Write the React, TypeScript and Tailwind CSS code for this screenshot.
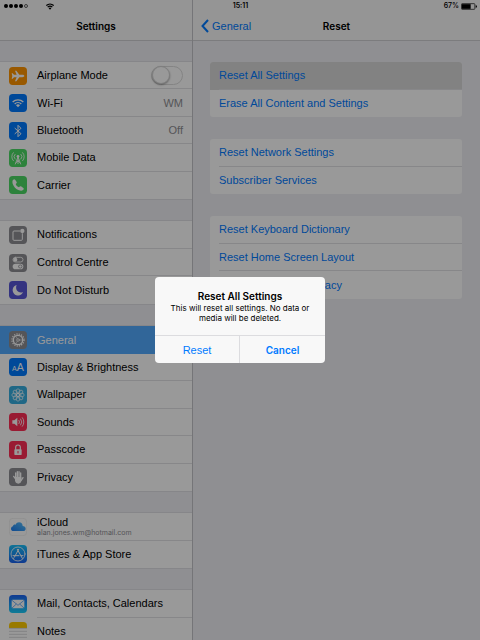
import { ReactNode, useState } from "react";

interface IconProps {
  color: string;
  children?: ReactNode;
}

// every row icon is drawn on a 54 unit grid and shown at 18px
const Icon = ({ color, children }: IconProps) => (
  <svg viewBox="0 0 54 54" className="size-[18px] shrink-0" aria-hidden="true">
    <rect width="54" height="54" rx="11" fill={color} />
    {children}
  </svg>
);

const stroke = {
  fill: "none",
  stroke: "#fff",
  strokeLinecap: "round",
  strokeLinejoin: "round",
} as const;

const AirplaneIcon = () => (
  <Icon color="#ff9500">
    <path
      fill="#fff"
      d="M46 27c0 2-3 3.500-6 3.500h-9L22 43h-4l5-12.500h-8L11 35H8l2-8-2-8h3l4 4.500h8L18 11h4l9 12.500h9c3 0 6 1.500 6 3.500z"
    />
  </Icon>
);

const WifiIcon = () => (
  <Icon color="#007aff">
    <g {...stroke} strokeWidth="4" strokeLinecap="butt">
      <path d="M11 24a23 23 0 0 1 32 0" />
      <path d="M17 30a14.500 14.500 0 0 1 20 0" />
    </g>
    <path fill="#fff" d="M21 34a8.500 8.500 0 0 1 12 0l-6 6z" />
  </Icon>
);

const BluetoothIcon = () => (
  <Icon color="#007aff">
    <path {...stroke} strokeWidth="3" d="M18 19l18 16-9 9V10l9 9-18 16" />
  </Icon>
);

const MobileIcon = () => (
  <Icon color="#4cd964">
    <g {...stroke} strokeWidth="2.500">
      <path d="M18 16a10 10 0 0 0 0 14M13 11a17 17 0 0 0 0 24M36 16a10 10 0 0 1 0 14M41 11a17 17 0 0 1 0 24" />
      <path d="M27 24l-8 21M27 24l8 21M24 34l9 7M30 34l-9 7M27 24v20" />
    </g>
    <circle cx="27" cy="22" r="4" fill="#fff" />
  </Icon>
);

const CarrierIcon = () => (
  <Icon color="#4cd964">
    <path
      fill="#fff"
      d="M12 12c3-3 5-3 7 0l4 6c1 2 0 4-3 6 2 5 5 8 10 10 2-3 4-4 6-3l6 4c3 2 3 4 0 7-3 3-7 3-12 1C20 39 14 32 11 23c-1-5-1-9 1-11z"
    />
  </Icon>
);

const NotificationsIcon = () => (
  <Icon color="#8e8e93">
    <path {...stroke} strokeWidth="3" d="M32 15H15c-2 0-3 1-3 3v22c0 2 1 3 3 3h22c2 0 3-1 3-3V23" />
    <circle cx="40" cy="15" r="6.500" fill="#fff" />
  </Icon>
);

const ControlIcon = () => (
  <Icon color="#8e8e93">
    <rect x="12" y="10" width="30" height="14" rx="7" {...stroke} strokeWidth="2.500" />
    <circle cx="19" cy="17" r="6" fill="#fff" />
    <rect x="11" y="29" width="32" height="17" rx="8.500" fill="#fff" />
    <circle cx="34" cy="37.500" r="6" fill="#8e8e93" />
    <circle cx="34" cy="37.500" r="4" fill="#fff" />
  </Icon>
);

const MoonIcon = () => (
  <Icon color="#5856d6">
    <path fill="#fff" d="M23 12a16 16 0 1 0 19 21c-14 6-25-7-19-21z" />
  </Icon>
);

const GearIcon = () => (
  <Icon color="#8e8e93">
    <circle cx="27" cy="27" r="18" fill="none" stroke="#fff" strokeWidth="4" strokeDasharray="3.500 3.570" />
    <circle cx="27" cy="27" r="14" {...stroke} strokeWidth="4" />
    <circle cx="27" cy="27" r="4" {...stroke} strokeWidth="2" />
    <path {...stroke} strokeWidth="1.500" d="M31 27h9M25 23.500L20 15M25 30.500L20 39" />
  </Icon>
);

const DisplayIcon = () => (
  <Icon color="#007aff">
    <text x="9" y="38" fill="#fff" fontSize="21" fontWeight="500">
      A
    </text>
    <text x="23" y="38" fill="#fff" fontSize="32" fontWeight="500">
      A
    </text>
  </Icon>
);

const WallpaperIcon = () => (
  <Icon color="#36aee0">
    <g fill="none" stroke="#fff" strokeWidth="2">
      {[0, 45, 90, 135, 180, 225, 270, 315].map((angle) => (
        <ellipse key={angle} cx="27" cy="16" rx="5.500" ry="7.500" transform={`rotate(${angle} 27 27)`} />
      ))}
      <circle cx="27" cy="27" r="5" />
    </g>
  </Icon>
);

const SoundsIcon = () => (
  <Icon color="#ff2d55">
    <path fill="#fff" d="M10 22h6l9-8v26l-9-8h-6z" />
    <path {...stroke} strokeWidth="2.500" d="M30 22a8 8 0 0 1 0 10M35 18a14 14 0 0 1 0 18M40 14a20 20 0 0 1 0 26" />
  </Icon>
);

const PasscodeIcon = () => (
  <Icon color="#ff2d55">
    <rect x="16" y="25" width="22" height="17" rx="2" fill="#fff" />
    <path {...stroke} strokeWidth="3.500" d="M20 25v-6a7 7 0 0 1 14 0v6" />
    <path stroke="#ff2d55" strokeWidth="3" strokeLinecap="round" d="M27 31v5" />
  </Icon>
);

const PrivacyIcon = () => (
  <Icon color="#8e8e93">
    <g {...stroke} strokeWidth="4">
      <path d="M20 30V15M25 28V11M30 28V11M35 30V15M36 38l6-9M20 33l-6-8" />
    </g>
    <path fill="#fff" d="M18 27h19v10c0 6-3 10-9 10s-10-4-10-10z" />
  </Icon>
);

const CloudIcon = () => (
  <Icon color="#fff">
    <defs>
      <linearGradient id="cloud" x1="0" x2="1" y1="1" y2="0">
        <stop offset="0" stopColor="#1a7cf2" />
        <stop offset="1" stopColor="#5cc2fa" />
      </linearGradient>
    </defs>
    <path
      fill="url(#cloud)"
      d="M14 39c-5 0-8-3-8-7 0-4 3-6 6-7 0-4 4-6 8-5 2-5 6-7 10-7 7 0 11 5 11 11 5 0 9 3 9 8 0 4-3 7-8 7z"
    />
    <rect x="1" y="1" width="52" height="52" rx="11" fill="none" stroke="#eaeaea" strokeWidth="2" />
  </Icon>
);

const StoreIcon = () => (
  <Icon color="url(#store)">
    <defs>
      <linearGradient id="store" x1="0" x2="0" y1="0" y2="1">
        <stop offset="0" stopColor="#19c2fb" />
        <stop offset="1" stopColor="#1b62f0" />
      </linearGradient>
    </defs>
    <circle cx="27" cy="27" r="21" {...stroke} strokeWidth="2.500" />
    <path {...stroke} strokeWidth="3" d="M29 13L17 35M25 13l15 27M12 32h18M36 32h6M15 38l-1 2" />
  </Icon>
);

const MailIcon = () => (
  <Icon color="url(#mail)">
    <defs>
      <linearGradient id="mail" x1="0" x2="0" y1="0" y2="1">
        <stop offset="0" stopColor="#1b63f3" />
        <stop offset="1" stopColor="#19cffb" />
      </linearGradient>
    </defs>
    <rect x="8" y="14" width="38" height="26" rx="3" fill="#fff" />
    <path fill="none" stroke="#2a8df5" strokeWidth="2" d="M9 16l18 15 18-15M9 39l13-12M45 39L32 27" />
  </Icon>
);

const NotesIcon = () => (
  <Icon color="#fff">
    <path fill="#ffcc00" d="M0 18v-7A11 11 0 0 1 11 0h32a11 11 0 0 1 11 11v7z" />
    <path stroke="#c4c4c8" strokeWidth="2" d="M0 19h54M0 28h54M0 37h54M0 46h54" />
  </Icon>
);

interface Item {
  label: string;
  icon: ReactNode;
  value?: string;
  detail?: string;
}

interface Group {
  height: string;
  items: Item[];
}

const sidebar: Group[] = [
  {
    height: "h-[137px]",
    items: [
      { label: "Airplane Mode", icon: <AirplaneIcon /> },
      { label: "Wi-Fi", icon: <WifiIcon />, value: "WM" },
      { label: "Bluetooth", icon: <BluetoothIcon />, value: "Off" },
      { label: "Mobile Data", icon: <MobileIcon /> },
      { label: "Carrier", icon: <CarrierIcon /> },
    ],
  },
  {
    height: "h-[83px]",
    items: [
      { label: "Notifications", icon: <NotificationsIcon /> },
      { label: "Control Centre", icon: <ControlIcon /> },
      { label: "Do Not Disturb", icon: <MoonIcon /> },
    ],
  },
  {
    height: "h-[165px]",
    items: [
      { label: "General", icon: <GearIcon /> },
      { label: "Display & Brightness", icon: <DisplayIcon /> },
      { label: "Wallpaper", icon: <WallpaperIcon /> },
      { label: "Sounds", icon: <SoundsIcon /> },
      { label: "Passcode", icon: <PasscodeIcon /> },
      { label: "Privacy", icon: <PrivacyIcon /> },
    ],
  },
  {
    height: "h-[55px]",
    items: [
      { label: "iCloud", icon: <CloudIcon />, detail: "alan.jones.wm@hotmail.com" },
      { label: "iTunes & App Store", icon: <StoreIcon /> },
    ],
  },
  {
    height: "h-[55px]",
    items: [
      { label: "Mail, Contacts, Calendars", icon: <MailIcon /> },
      { label: "Notes", icon: <NotesIcon /> },
    ],
  },
];

const resetGroups = [
  { height: "h-[55px]", items: ["Reset All Settings", "Erase All Content and Settings"] },
  { height: "h-[55px]", items: ["Reset Network Settings", "Subscriber Services"] },
  {
    height: "h-[83px]",
    items: ["Reset Keyboard Dictionary", "Reset Home Screen Layout", "Reset Location & Privacy"],
  },
];

const StatusBar = () => (
  <div className="absolute inset-x-0 top-0 grid h-3 grid-cols-3 items-center pr-[3px] pl-1 font-['Inter',sans-serif] text-[7px] leading-3 text-black">
    <div className="flex items-center gap-px">
      {[1, 2, 3, 4].map((dot) => (
        <span key={dot} className="size-[4px] rounded-full bg-black" />
      ))}
      <span className="size-[4px] rounded-full border border-black/60" />
      <svg viewBox="0 0 24 20" className="ml-[17px] h-[7px] w-2" aria-hidden="true">
        <path fill="none" stroke="#000" strokeWidth="3.500" d="M1 7a16 16 0 0 1 22 0M5 12a10 10 0 0 1 14 0" />
        <path d="M8 15a6 6 0 0 1 8 0l-4 5z" />
      </svg>
    </div>
    <span className="text-center font-semibold">15:11</span>
    <div className="flex items-center justify-end gap-[2px]">
      <span className="font-medium">67%</span>
      <svg viewBox="0 0 48 20" className="h-[7px] w-4" aria-hidden="true">
        <rect x="1.500" y="1.500" width="40" height="17" rx="2" fill="none" stroke="#000" strokeWidth="2" />
        <rect x="3" y="3" width="26" height="14" />
        <path d="M44 6a4 4 0 0 1 0 8z" />
      </svg>
    </div>
  </div>
);

const SidebarRow = ({ item, last }: { item: Item; last: boolean }) => {
  const [on, setOn] = useState(false);
  const selected = item.label === "General";
  const rowClass = `flex min-h-0 flex-1 items-center gap-[10px] pl-[9px] ${
    selected ? "bg-[#52abff] text-white" : ""
  }`;
  const body = `flex h-full min-w-0 flex-1 items-center justify-between pr-[9px] ${
    last || selected ? "" : "border-b border-[#e2e2e5]"
  }`;

  if (item.label === "Airplane Mode") {
    return (
      <label className={rowClass}>
        {item.icon}
        <span className={body}>
          {item.label}
          <input
            type="checkbox"
            role="switch"
            checked={on}
            onChange={(e) => setOn(e.target.checked)}
            className="flex h-[19px] w-8 appearance-none items-center rounded-full border border-[#dcdcdc] bg-white before:size-[18px] before:rounded-full before:border before:border-[#d2d2d2] before:bg-white before:shadow-[0_1px_2px_rgba(0,0,0,0.35)] checked:justify-end checked:bg-[#4cd964]"
          />
        </span>
      </label>
    );
  }

  return (
    <a href="#" className={rowClass}>
      {item.icon}
      <span className={body}>
        <span className="flex flex-col">
          <span className={item.detail ? "leading-3" : ""}>{item.label}</span>
          {item.detail && (
            <span className="font-['Inter',sans-serif] text-[7px] leading-[9px] text-[#8e8e93]">
              {item.detail}
            </span>
          )}
        </span>
        {item.value && <span className="text-[#8e8e93]">{item.value}</span>}
      </span>
    </a>
  );
};

const Sidebar = () => (
  <aside className="flex w-2/5 shrink-0 flex-col">
    <header className="flex h-[41px] shrink-0 items-center justify-center border-b border-[#cfcfd3] bg-[#f8f8f8] pt-3">
      <h1 className="font-['Inter',sans-serif] text-[10px] font-semibold">Settings</h1>
    </header>
    <nav className="flex flex-1 flex-col gap-[22px] overflow-y-auto pt-[21px] [scrollbar-width:none]">
      {sidebar.map((group) => (
        <div
          key={group.items[0].label}
          className={`flex shrink-0 flex-col bg-white shadow-[0_0_0_1px_#e0e0e4] ${group.height}`}
        >
          {group.items.map((item, i) => (
            <SidebarRow key={item.label} item={item} last={i === group.items.length - 1} />
          ))}
        </div>
      ))}
    </nav>
  </aside>
);

const ResetPane = () => (
  <main className="flex min-w-0 flex-1 flex-col border-l border-[#c4c4c8]">
    <header className="grid h-[41px] shrink-0 grid-cols-3 items-center border-b border-[#cfcfd3] bg-[#f8f8f8] pt-3">
      <a href="#" className="flex items-center gap-[3px] pl-2 text-[#007aff]">
        <svg viewBox="0 0 8 14" className="h-[14px] w-2" aria-hidden="true">
          <path d="M7 1L1.500 7 7 13" fill="none" stroke="currentColor" strokeWidth="2" />
        </svg>
        General
      </a>
      <h2 className="text-center font-['Inter',sans-serif] text-[10px] font-semibold">Reset</h2>
    </header>
    <div className="flex flex-col gap-[22px] pt-[21px] pr-[18px] pl-[17px]">
      {resetGroups.map((group) => (
        <div
          key={group.items[0]}
          className={`flex flex-col overflow-hidden rounded-[3px] bg-white ${group.height}`}
        >
          {group.items.map((label, i) => (
            <button
              key={label}
              type="button"
              className={`flex flex-1 pl-[9px] text-left text-[#007aff] ${
                label === "Reset All Settings" ? "bg-[#d9d9d9]" : ""
              }`}
            >
              <span
                className={`flex h-full flex-1 items-center ${
                  i === group.items.length - 1 ? "" : "border-b border-[#e2e2e5]"
                }`}
              >
                {label}
              </span>
            </button>
          ))}
        </div>
      ))}
    </div>
  </main>
);

const Alert = () => (
  <div className="absolute inset-0 flex items-center justify-center bg-black/40">
    <div
      role="alertdialog"
      aria-labelledby="alert-title"
      aria-describedby="alert-text"
      className="w-[170px] overflow-hidden rounded-[4px] bg-[#f8f8f8] text-center text-black"
    >
      <div className="px-3 pt-3 pb-3 font-['Inter',sans-serif]">
        <h2 id="alert-title" className="text-[10px] leading-[14px] font-semibold">
          Reset All Settings
        </h2>
        <p id="alert-text" className="text-[8px] leading-[10px]">
          This will reset all settings. No data or media will be deleted.
        </p>
      </div>
      <div className="grid grid-cols-2 divide-x divide-[#dcdcdf] border-t border-[#dcdcdf] text-[#007aff]">
        <button type="button" className="h-[27px]">
          Reset
        </button>
        <button type="button" className="h-[27px] font-['Inter',sans-serif] text-[10px] font-semibold">
          Cancel
        </button>
      </div>
    </div>
  </div>
);

const App = () => (
  <div className="relative flex h-screen overflow-hidden bg-[#efeff4] font-['Liberation_Sans',Arial,sans-serif] text-[11px] leading-[14px] text-black">
    <Sidebar />
    <ResetPane />
    <StatusBar />
    <Alert />
  </div>
);

export default App;
